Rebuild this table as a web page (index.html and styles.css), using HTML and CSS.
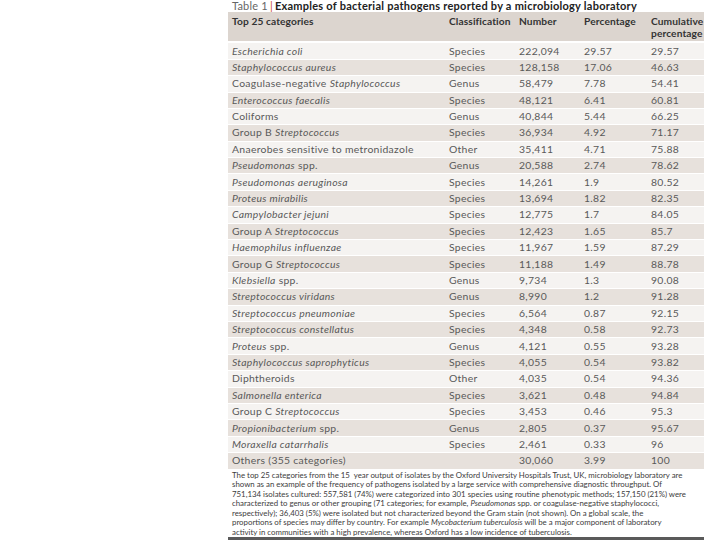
FILE: index.html
```html
<!DOCTYPE html>
<html>
<head>
<meta charset="utf-8">
<link rel="stylesheet" href="styles.css">
</head>
<body>
<div class="panel">
  <div class="title"><span class="tnum">Table 1</span><span class="bar">|</span><span class="tbold">Examples of bacterial pathogens reported by a microbiology laboratory</span></div>
  <table class="data">
    <colgroup>
      <col class="c1"><col class="c2"><col class="c3"><col class="c4"><col class="c5">
    </colgroup>
    <thead>
      <tr><th>Top 25 categories</th><th>Classification</th><th>Number</th><th>Percentage</th><th>Cumulative<br>percentage</th></tr>
    </thead>
    <tbody>
      <tr><td><i>Escherichia coli</i></td><td>Species</td><td>222,094</td><td>29.57</td><td>29.57</td></tr>
      <tr><td><i>Staphylococcus aureus</i></td><td>Species</td><td>128,158</td><td>17.06</td><td>46.63</td></tr>
      <tr><td>Coagulase-negative <i>Staphylococcus</i></td><td>Genus</td><td>58,479</td><td>7.78</td><td>54.41</td></tr>
      <tr><td><i>Enterococcus faecalis</i></td><td>Species</td><td>48,121</td><td>6.41</td><td>60.81</td></tr>
      <tr><td>Coliforms</td><td>Genus</td><td>40,844</td><td>5.44</td><td>66.25</td></tr>
      <tr><td>Group B <i>Streptococcus</i></td><td>Species</td><td>36,934</td><td>4.92</td><td>71.17</td></tr>
      <tr><td>Anaerobes sensitive to metronidazole</td><td>Other</td><td>35,411</td><td>4.71</td><td>75.88</td></tr>
      <tr><td><i>Pseudomonas</i> spp.</td><td>Genus</td><td>20,588</td><td>2.74</td><td>78.62</td></tr>
      <tr><td><i>Pseudomonas aeruginosa</i></td><td>Species</td><td>14,261</td><td>1.9</td><td>80.52</td></tr>
      <tr><td><i>Proteus mirabilis</i></td><td>Species</td><td>13,694</td><td>1.82</td><td>82.35</td></tr>
      <tr><td><i>Campylobacter jejuni</i></td><td>Species</td><td>12,775</td><td>1.7</td><td>84.05</td></tr>
      <tr><td>Group A <i>Streptococcus</i></td><td>Species</td><td>12,423</td><td>1.65</td><td>85.7</td></tr>
      <tr><td><i>Haemophilus influenzae</i></td><td>Species</td><td>11,967</td><td>1.59</td><td>87.29</td></tr>
      <tr><td>Group G <i>Streptococcus</i></td><td>Species</td><td>11,188</td><td>1.49</td><td>88.78</td></tr>
      <tr><td><i>Klebsiella</i> spp.</td><td>Genus</td><td>9,734</td><td>1.3</td><td>90.08</td></tr>
      <tr><td><i>Streptococcus viridans</i></td><td>Genus</td><td>8,990</td><td>1.2</td><td>91.28</td></tr>
      <tr><td><i>Streptococcus pneumoniae</i></td><td>Species</td><td>6,564</td><td>0.87</td><td>92.15</td></tr>
      <tr><td><i>Streptococcus constellatus</i></td><td>Species</td><td>4,348</td><td>0.58</td><td>92.73</td></tr>
      <tr><td><i>Proteus</i> spp.</td><td>Genus</td><td>4,121</td><td>0.55</td><td>93.28</td></tr>
      <tr><td><i>Staphylococcus saprophyticus</i></td><td>Species</td><td>4,055</td><td>0.54</td><td>93.82</td></tr>
      <tr><td>Diphtheroids</td><td>Other</td><td>4,035</td><td>0.54</td><td>94.36</td></tr>
      <tr><td><i>Salmonella enterica</i></td><td>Species</td><td>3,621</td><td>0.48</td><td>94.84</td></tr>
      <tr><td>Group C <i>Streptococcus</i></td><td>Species</td><td>3,453</td><td>0.46</td><td>95.3</td></tr>
      <tr><td><i>Propionibacterium</i> spp.</td><td>Genus</td><td>2,805</td><td>0.37</td><td>95.67</td></tr>
      <tr><td><i>Moraxella catarrhalis</i></td><td>Species</td><td>2,461</td><td>0.33</td><td>96</td></tr>
      <tr><td>Others (355 categories)</td><td></td><td>30,060</td><td>3.99</td><td>100</td></tr>
    </tbody>
  </table>
  <p class="caption">The top 25 categories from the 15&nbsp; year output of isolates by the Oxford University Hospitals Trust, UK, microbiology laboratory are<br>shown as an example of the frequency of pathogens isolated by a large service with comprehensive diagnostic throughput. Of<br>751,134 isolates cultured: 557,581 (74%) were categorized into 301 species using routine phenotypic methods; 157,150 (21%) were<br>characterized to genus or other grouping (71 categories; for example, <i>Pseudomonas</i> spp. or coagulase-negative staphylococci,<br>respectively); 36,403 (5%) were isolated but not characterized beyond the Gram stain (not shown). On a global scale, the<br>proportions of species may differ by country. For example <i>Mycobacterium tuberculosis</i> will be a major component of laboratory<br>activity in communities with a high prevalence, whereas Oxford has a low incidence of tuberculosis.</p>
</div>
</body>
</html>
```

FILE: styles.css
```css
html, body {
  margin: 0;
  padding: 0;
  background: #ffffff;
}
body {
  font-family: Lato, "Open Sans", sans-serif;
  color: #555;
  width: 720px;
  height: 540px;
  overflow: hidden;
}
.panel {
  margin-left: 228px;
  width: 476px;
  height: 540px;
  box-sizing: border-box;
  border-bottom: 3px solid #5a5a5a;
  display: flex;
  flex-direction: column;
}
.title {
  height: 13px;
  line-height: 12px;
  font-size: 11px;
  letter-spacing: 0.25px;
  padding-left: 4px;
  white-space: nowrap;
}
.tnum {
  color: #666;
  letter-spacing: 0.2px;
}
.bar {
  color: #c9502e;
  margin: 0 2px 0 2px;
}
.tbold {
  font-weight: 700;
  color: #222;
}
.data {
  border-collapse: collapse;
  width: 476px;
  table-layout: fixed;
  font-size: 10.4px;
  letter-spacing: 0.3px;
}
.c1 { width: 217px; }
.c2 { width: 70px; }
.c3 { width: 65px; }
.c4 { width: 67px; }
.c5 { width: 57px; }
.data th {
  background: #dcd5cf;
  color: #333;
  font-weight: 700;
  font-size: 10.2px;
  letter-spacing: 0.1px;
  text-align: left;
  vertical-align: top;
  padding: 3px 0 0 4px;
  height: 26px;
  line-height: 12px;
  white-space: nowrap;
  border-bottom: 2px solid #fff;
}
.data td {
  height: 15.4px;
  padding: 0 0 0 4px;
  line-height: 15px;
  white-space: nowrap;
  border-bottom: 1px solid #fff;
  color: #595959;
}
.data tbody tr:nth-child(odd) td {
  background: #f5f3f1;
}
.data tbody tr:nth-child(even) td {
  background: #e7e1dc;
}
.caption {
  margin: 1px 0 0 0;
  padding-left: 4px;
  font-size: 7.85px;
  line-height: 9.5px;
  color: #3c3c3c;
  white-space: nowrap;
}
```
